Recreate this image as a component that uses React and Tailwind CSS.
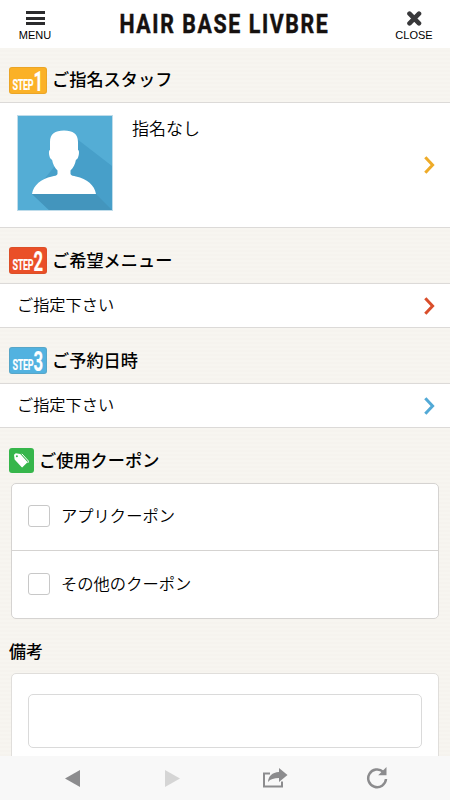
import clsx from 'clsx';

const steps = [
  { no: '1', title: 'ご指名スタッフ', badge: 'bg-[#fbb127]', arrow: 'text-[#eeab28]' },
  { no: '2', title: 'ご希望メニュー', badge: 'bg-[#ea4f28]', arrow: 'text-[#d94e2b]' },
  { no: '3', title: 'ご予約日時', badge: 'bg-[#52b2e0]', arrow: 'text-[#52a9d6]' },
];

const coupons = ['アプリクーポン', 'その他のクーポン'];

const Header = () => (
  <header className="h-12 shrink-0 bg-white flex justify-between">
    <button className="w-[70px] pt-[11px] flex flex-col items-center">
      <span className="w-[19px] h-[14px] flex flex-col justify-between">
        <span className="h-[3px] bg-[#2b2b2d]" />
        <span className="h-[3px] bg-[#2b2b2d]" />
        <span className="h-[3px] bg-[#2b2b2d]" />
      </span>
      <span className="mt-1 text-[11px] leading-[13px] font-['Liberation_Sans',sans-serif]">MENU</span>
    </button>
    <h1 className="flex">
      <svg className="w-[212px] h-12 overflow-visible" viewBox="0 0 212 48" fill="#16110f" stroke="#16110f" strokeWidth=".5">
        <text
          transform="translate(1.500 33) scale(.82 1)"
          textLength="254"
          className="text-[26px] font-bold font-[Roboto,sans-serif]"
        >
          HAIR BASE LIVBRE
        </text>
      </svg>
    </h1>
    <button className="w-[72px] pt-[11px] flex flex-col items-center">
      <svg className="w-4 h-[15px]" viewBox="0 0 16 15" stroke="#38383a" strokeWidth="4.600" strokeLinecap="round">
        <path d="M3.500 2.700l9.500 9.600M13 2.700l-9.500 9.600" />
      </svg>
      <span className="mt-[3px] text-[11px] leading-[13px] font-['Liberation_Sans',sans-serif]">CLOSE</span>
    </button>
  </header>
);

const StepHeading = ({ step, first }) => (
  <div className={clsx('flex items-center px-[9px] pt-[10px] border-b border-[#dcdad8]', first ? 'h-[55px]' : 'h-14')}>
    <span className={clsx('w-[38px] h-[27px] rounded-[3px] shadow-[inset_0_0_0_1px_rgba(120,80,30,0.12)]', step.badge)}>
      <svg className="w-[38px] h-[27px] overflow-visible" viewBox="0 0 38 27" fill="#fff" stroke="#fff" strokeWidth=".2">
        <text transform="translate(3.500 22.500) scale(.62 1)" textLength="34" className="text-[14.500px] font-bold font-[Roboto,sans-serif]">
          STEP
        </text>
        <text transform="translate(24.600 23.500) scale(.62 1)" className="text-[27px] font-bold font-[Roboto,sans-serif]">
          {step.no}
        </text>
      </svg>
    </span>
    <h2 className="ml-[5px] mb-[2px] text-[17.200px] leading-none font-medium">{step.title}</h2>
  </div>
);

const Arrow = ({ className }) => (
  <svg className={clsx('w-3 h-[18px] shrink-0', className)} viewBox="0 0 12 18" fill="none" stroke="currentColor" strokeWidth="3">
    <path d="M1.300 1.200L8.600 9l-7.300 7.800" />
  </svg>
);

const Avatar = () => (
  <svg className="w-24 h-24" viewBox="0 0 96 96">
    <path fill="#bfdcea" d="M0 0h96v96H0z" />
    <path fill="#54add5" d="M1 1h94v94H1z" />
    <path fill="#479fc9" d="M60 24l35 27v44H32L15 79z" />
    <path fill="#4395bd" d="M15 79h64l16 16H32z" />
    <path
      fill="#fff"
      d="M33 27C33 19 38 15.500 47 15.500S61 19 61 27v8c1.600 0 1.200 6-.5 8.500-.5 1-1 1-1.500 1-1 5-2.500 8-5.500 11V59c.5 1.500 3 2 5.500 2.500C70 64 77.500 70 79 79H15c1.500-9 9-15 20-17.500 2.500-.5 5-1 5.500-2.500v-3.500c-3-3-4.500-6-5.500-11-.5 0-1 0-1.500-1C31.800 41 31.400 35 33 35z"
    />
  </svg>
);

const Toolbar = () => (
  <nav className="h-11 shrink-0 bg-[#f8f8f8] text-[#8c8c8e] flex items-center justify-between pl-[65px] pr-[62px]">
    <svg className="w-[15px] h-[17px]" viewBox="0 0 15 17" fill="currentColor">
      <path d="M0 8.500L15 0v17z" />
    </svg>
    <svg className="w-[15px] h-[17px] ml-[3px] text-[#d5d5d5]" viewBox="0 0 15 17" fill="currentColor">
      <path d="M15 8.500L0 0v17z" />
    </svg>
    <svg className="w-[26px] h-5 ml-[1px]" viewBox="0 0 26 20" fill="currentColor">
      <path d="M1 4.500h7v2H3v11h16v-4h2v6H1z" />
      <path d="M17 0l8.500 7-8.500 7v-4c-5 0-8.500 1-11 4 .5-6 4-9.500 11-10z" />
    </svg>
    <svg className="w-[22px] h-[22px] -ml-[4px]" viewBox="0 0 22 22">
      <path fill="none" stroke="currentColor" strokeWidth="2.500" d="M17.200 4.800A8.900 8.900 0 1 0 20 12" />
      <path fill="currentColor" d="M20.500 0v8.300h-8.300z" />
    </svg>
  </nav>
);

export default function App() {
  return (
    <div className="w-[450px] h-[800px] overflow-hidden flex flex-col text-black font-['Noto_Sans_CJK_JP',sans-serif] bg-[#f6f3ee]">
      <Header />
      <main className="flex-1 min-h-0 overflow-hidden bg-[repeating-linear-gradient(180deg,#f7f5f0_0px,#f7f5f0_2px,#f4f1ec_3px,#f7f5f0_4px)]">
        <StepHeading step={steps[0]} first />
        <div className="h-[125px] bg-white border-b border-[#dcdad8] flex pl-[17px] pr-[14px]">
          <div className="pt-3">
            <Avatar />
          </div>
          <p className="flex-1 ml-[19px] pt-4 text-[17px] leading-none font-[350]">指名なし</p>
          <div className="flex items-center">
            <Arrow className={steps[0].arrow} />
          </div>
        </div>

        {steps.slice(1).map((step) => (
          <section key={step.no}>
            <StepHeading step={step} />
            <div className="h-11 bg-white border-b border-[#dcdad8] flex items-center justify-between pl-[17px] pr-[14px]">
              <p className="mb-[2px] text-[16.200px] leading-none font-[350]">ご指定下さい</p>
              <Arrow className={step.arrow} />
            </div>
          </section>
        ))}

        <div className="h-[55px] pt-[10px] flex items-center pl-[9px]">
          <span className="w-[25px] h-[25px] rounded-[3px] bg-[#36b64b] flex items-center justify-center">
            <svg className="w-[15px] h-[15px]" viewBox="0 0 15 15" fill="none">
              <path fill="#fff" d="M0 1.800L.6 6.500l6.900 7.600c.4.400.8.400 1.200 0l4.300-4.300c.4-.4.400-.8 0-1.200L6.300 1 1.800.2z" />
              <circle cx="2.900" cy="3.200" r="1" fill="#36b64b" />
              <path stroke="#fff" strokeWidth="1" d="M7.800.8l6.600 7.200-.6 2" />
            </svg>
          </span>
          <h2 className="ml-[5px] mb-px text-[17.200px] leading-none font-medium">ご使用クーポン</h2>
        </div>

        <div className="mx-[11px] bg-white border border-[#d5d3d1] rounded-[5px]">
          {coupons.map((label, i) => (
            <label key={label} className={clsx('h-[67px] flex items-center pl-4 pb-[2px]', i === 0 && 'border-b border-[#d5d3d1]')}>
              <input type="checkbox" className="appearance-none w-[22px] h-[22px] border border-[#c8c8c8] rounded-[3px]" />
              <span className="ml-[11px] mb-px text-[16.300px] leading-none font-[350]">{label}</span>
            </label>
          ))}
        </div>

        <h2 className="mt-[23px] ml-[9px] text-[17px] leading-none font-medium">備考</h2>
        <div className="mt-[14px] mx-[11px] h-[100px] bg-white border border-[#e0dedb] rounded-[5px] px-4 pt-5">
          <textarea className="block w-full h-[54px] resize-none border border-[#dadada] rounded-[5px]" />
        </div>
      </main>
      <Toolbar />
    </div>
  );
}
